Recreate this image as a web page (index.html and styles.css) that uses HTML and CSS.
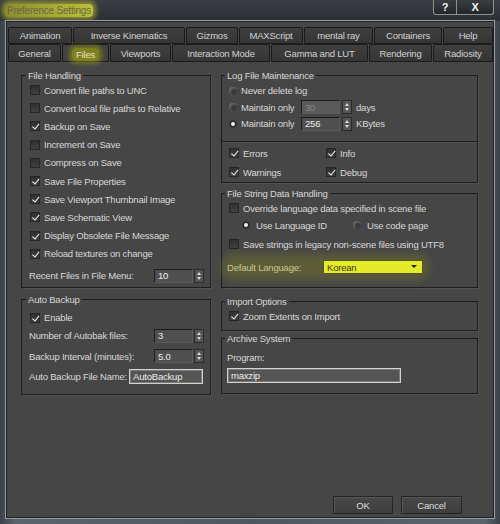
FILE: index.html
```html
<!DOCTYPE html>
<html>

<head>
  <title>Preference Settings</title>
  <link rel="stylesheet" href="styles.css">
</head>

<body>
 <div class="window">
  <div class="title-bar">
    <span class="title">Preference Settings</span>
    <div class="title-btns">
      <span class="tbtn tbtn-help">?</span>
      <span class="tbtn tbtn-close">X</span>
    </div>
  </div>

  <div class="client">
    <div class="tabs tabs-top">
      <span class="tab">Animation</span>
      <span class="tab">Inverse Kinematics</span>
      <span class="tab">Gizmos</span>
      <span class="tab">MAXScript</span>
      <span class="tab">mental ray</span>
      <span class="tab">Containers</span>
      <span class="tab">Help</span>
    </div>
    <div class="tabs tabs-bottom">
      <span class="tab">General</span>
      <span class="tab active"><span class="marker-files">Files</span></span>
      <span class="tab">Viewports</span>
      <span class="tab">Interaction Mode</span>
      <span class="tab">Gamma and LUT</span>
      <span class="tab">Rendering</span>
      <span class="tab">Radiosity</span>
    </div>

    <div class="page">
      <!-- left column -->
      <div class="col col-left">
        <fieldset class="group file-handling">
          <legend>File Handling</legend>
          <div class="row"><span class="cb"></span>Convert file paths to UNC</div>
          <div class="row"><span class="cb"></span>Convert local file paths to Relative</div>
          <div class="row"><span class="cb on"></span>Backup on Save</div>
          <div class="row"><span class="cb"></span>Increment on Save</div>
          <div class="row"><span class="cb"></span>Compress on Save</div>
          <div class="row"><span class="cb on"></span>Save File Properties</div>
          <div class="row"><span class="cb on"></span>Save Viewport Thumbnail Image</div>
          <div class="row"><span class="cb on"></span>Save Schematic View</div>
          <div class="row"><span class="cb on"></span>Display Obsolete File Message</div>
          <div class="row"><span class="cb on"></span>Reload textures on change</div>
          <div class="field-row recent-row">
            <span>Recent Files in File Menu:</span>
            <span class="num">10</span>
            <span class="spin"></span>
          </div>
        </fieldset>

        <fieldset class="group auto-backup">
          <legend>Auto Backup</legend>
          <div class="row enable-row"><span class="cb on"></span>Enable</div>
          <div class="field-row">
            <span>Number of Autobak files:</span>
            <span class="num">3</span>
            <span class="spin"></span>
          </div>
          <div class="field-row">
            <span>Backup Interval (minutes):</span>
            <span class="num">5.0</span>
            <span class="spin"></span>
          </div>
          <div class="field-row name-row">
            <span>Auto Backup File Name:</span>
            <span class="text-box">AutoBackup</span>
          </div>
        </fieldset>
      </div>

      <!-- right column -->
      <div class="col col-right">
        <fieldset class="group log-group">
          <legend>Log File Maintenance</legend>
          <div class="radio-row"><span class="opt"><span class="rb"></span>Never delete log</span></div>
          <div class="radio-row">
            <span class="opt"><span class="rb"></span>Maintain only</span>
            <span class="num disabled">30</span>
            <span class="spin"></span>
            <span class="unit">days</span>
          </div>
          <div class="radio-row">
            <span class="opt"><span class="rb on"></span>Maintain only</span>
            <span class="num">256</span>
            <span class="spin"></span>
            <span class="unit">KBytes</span>
          </div>
          <div class="divider"></div>
          <div class="check-grid">
            <div class="row"><span class="cb on"></span>Errors</div>
            <div class="row"><span class="cb on"></span>Info</div>
            <div class="row"><span class="cb on"></span>Warnings</div>
            <div class="row"><span class="cb on"></span>Debug</div>
          </div>
        </fieldset>

        <fieldset class="group string-group">
          <legend>File String Data Handling</legend>
          <div class="row override-row"><span class="cb"></span>Override language data specified in scene file</div>
          <div class="lang-radios">
            <span class="opt"><span class="rb on"></span>Use Language ID</span>
            <span class="opt"><span class="rb"></span>Use code page</span>
          </div>
          <div class="row utf-row"><span class="cb"></span>Save strings in legacy non-scene files using UTF8</div>
          <div class="lang-row">
            <span class="lang-label">Default Language:</span>
            <span class="dropdown">Korean<span class="drop-arrow"></span></span>
          </div>
        </fieldset>

        <fieldset class="group import-group">
          <legend>Import Options</legend>
          <div class="row"><span class="cb on"></span>Zoom Extents on Import</div>
        </fieldset>

        <fieldset class="group archive-group">
          <legend>Archive System</legend>
          <div class="program-label">Program:</div>
          <div class="text-box program-box">maxzip</div>
        </fieldset>
      </div>
    </div>

    <div class="footer">
      <button class="btn">OK</button>
      <button class="btn">Cancel</button>
    </div>
  </div>
 </div>
</body>

</html>
```

FILE: styles.css
```css
body {
    margin: 0;
    font-family: "Liberation Sans", Arial, sans-serif;
    font-size: 9.5px;
    letter-spacing: -0.2px;
    color: #d8d8d8;
    background: #4a5057;
}
.window {
    width: 500px;
    height: 524px;
    box-sizing: border-box;
    display: flex;
    flex-direction: column;
    padding: 0 6px 6px 6px;
    background: linear-gradient(to right, #3c4147, #5c636a 3%, #4f565d 50%, #5c636a 97%, #3c4147);
}

/* title bar */
.title-bar {
    height: 21px;
    margin: 0 -6px;
    padding: 0 6px 0 5px;
    display: flex;
    align-items: flex-start;
    justify-content: space-between;
    background: linear-gradient(#3b3e42, #2b2e32);
}
.title {
    margin-top: 4px;
    padding: 1px 2px;
    font-size: 10px;
    color: #66664a;
    border-radius: 4px;
    background: linear-gradient(to right, rgba(150,150,45,.9), rgba(195,200,55,.95));
    box-shadow: 0 0 5px 3px rgba(175,180,45,.7);
}
.title-btns {
    display: flex;
}
.tbtn {
    height: 15px;
    box-sizing: border-box;
    display: flex;
    align-items: center;
    justify-content: center;
    color: #f2f2f2;
    font-weight: bold;
    font-size: 11px;
    background: linear-gradient(#3a3d41, #24272a);
    border: 1px solid #8c9197;
    border-top: none;
}
.tbtn-help {
    width: 24px;
    border-radius: 0 0 0 3px;
}
.tbtn-close {
    width: 37px;
    border-left: none;
    border-radius: 0 0 3px 0;
}

/* client area */
.client {
    flex: 1;
    display: flex;
    flex-direction: column;
    padding: 5px 0 3px 1px;
    background: #464646;
    border: 1px solid #1f2225;
    box-shadow: 0 0 0 1px #979ea5;
}
.tabs {
    display: grid;
    column-gap: 1px;
    height: 17px;
}
.tabs-top {
    grid-template-columns: 64px 112px 52px 64px 69px 68px 50px;
}
.tabs-bottom {
    grid-template-columns: 53px 47px 61px 98px 97px 63px 60px;
}
.tab {
    display: flex;
    align-items: center;
    justify-content: center;
    box-sizing: border-box;
    color: #d2d2d2;
    background: linear-gradient(#3f3f3f, #353535);
    border: 1px solid #1b1b1b;
    border-radius: 2px 2px 0 0;
}
.tab.active {
    background: #424242;
}
.marker-files {
    padding: 1px 4px;
    margin-top: 3px;
    color: #e6e6b8;
    border-radius: 4px;
    background: rgba(150,150,25,.75);
    box-shadow: 0 0 4px 3px rgba(150,150,25,.55);
}

/* page with group boxes */
.page {
    flex: 1;
    display: grid;
    grid-template-columns: 190px 257px;
    column-gap: 10px;
    align-items: start;
    padding: 8.5px 0 0 13px;
}
.col {
    display: flex;
    flex-direction: column;
}
.group {
    box-sizing: border-box;
    margin: 0;
    min-width: 0;
    border: 1px solid #1e1e1e;
    box-shadow: 1px 1px 0 #525252;
}
.group legend {
    padding: 0 2px;
    margin-left: -4px;
    line-height: 11px;
    color: #d6d6d6;
}
.col-left .group {
    padding: 0 8px;
}
.col-right .group {
    padding: 0 7px;
}
.file-handling {
    height: 218.5px;
    padding-top: 0.5px !important;
}
.auto-backup {
    height: 101px;
    margin-top: 5.5px !important;
}
.log-group {
    height: 113.5px;
}
.string-group {
    height: 100.5px;
    margin-top: 4.5px !important;
}
.import-group {
    height: 35.5px;
    margin-top: 7.5px !important;
}
.archive-group {
    height: 61.5px;
    margin-top: 1.5px !important;
}

/* rows */
.row {
    display: flex;
    align-items: center;
    height: 18.2px;
    white-space: nowrap;
}
.cb {
    position: relative;
    flex: none;
    width: 10px;
    height: 10px;
    box-sizing: border-box;
    margin-right: 4px;
    border: 1px solid #262626;
    background: linear-gradient(#303030, #404040);
}
.cb.on::after {
    content: "";
    position: absolute;
    left: 2.5px;
    top: 0;
    width: 2.5px;
    height: 5.5px;
    border: solid #f2f2f2;
    border-width: 0 1.6px 1.6px 0;
    transform: rotate(40deg);
}
.rb {
    position: relative;
    flex: none;
    width: 8px;
    height: 8px;
    margin-right: 4px;
    border-radius: 50%;
    background: radial-gradient(circle at 65% 65%, #3a3a3a 30%, #6e6e6e 75%, #8a8a8a);
}
.rb.on {
    background: radial-gradient(circle, #2a2a2a 55%, #5a5a5a);
}
.rb.on::after {
    content: "";
    position: absolute;
    left: 2px;
    top: 2px;
    width: 4px;
    height: 4px;
    border-radius: 50%;
    background: #f2f2f2;
}
.opt {
    display: flex;
    align-items: center;
    white-space: nowrap;
}

/* numeric spinners and text boxes */
.num {
    height: 14px;
    box-sizing: border-box;
    display: flex;
    align-items: center;
    padding-left: 3px;
    color: #ececec;
    background: #4f4f4f;
    border: 1px solid #1c1c1c;
    border-right-color: #5a5a5a;
    border-bottom-color: #5a5a5a;
}
.num.disabled {
    color: #8a8a8a;
    background: #5a5a5a;
}
.spin {
    position: relative;
    width: 10px;
    height: 14px;
    box-sizing: border-box;
    margin-left: 1px;
    background: #555;
    border: 1px solid #2a2a2a;
}
.spin::before,
.spin::after {
    content: "";
    position: absolute;
    left: 1.5px;
    border-left: 2.5px solid transparent;
    border-right: 2.5px solid transparent;
}
.spin::before {
    top: 2px;
    border-bottom: 3px solid #dcdcdc;
}
.spin::after {
    bottom: 2px;
    border-top: 3px solid #dcdcdc;
}
.text-box {
    height: 15px;
    box-sizing: border-box;
    display: flex;
    align-items: center;
    padding-left: 3px;
    color: #ececec;
    background: #545454;
    border: 1px solid #d2d2d2;
    box-shadow: inset 0 0 0 1px #7a7a7a;
}

/* left column field rows */
.field-row {
    display: grid;
    grid-template-columns: 125px 39px 10px;
    align-items: center;
    height: 20.5px;
    margin-left: -1px;
    white-space: nowrap;
}
.recent-row {
    height: 18px;
    margin-top: 4px;
}
.enable-row {
    height: 16px;
    margin-top: 5px;
}
.name-row {
    grid-template-columns: 100px 74px;
}

/* log group */
.log-group .radio-row:first-of-type {
    margin-top: 2px;
}
.radio-row {
    display: grid;
    grid-template-columns: 72px 39px auto auto;
    justify-content: start;
    align-items: center;
    height: 16.5px;
}
.radio-row .spin {
    margin-left: 2px;
}
.unit {
    margin-left: 4px;
}
.divider {
    margin: 9px -7px 0 -7px;
    border-top: 1px solid #1e1e1e;
    box-shadow: 0 1px 0 #525252;
}
.check-grid {
    display: grid;
    grid-template-columns: 97px auto;
    margin-top: 1.5px;
}
.check-grid .row {
    height: 19px;
}

/* file string group */
.override-row {
    height: 17px;
    margin-top: 1px;
}
.lang-radios {
    display: grid;
    grid-template-columns: 111px auto;
    align-items: center;
    height: 17px;
    padding-left: 13px;
}
.lang-radios .rb {
    margin-right: 6px;
}
.utf-row {
    height: 17px;
    margin-top: 2px;
}
.lang-row {
    display: grid;
    grid-template-columns: 96px 100px;
    align-items: center;
    height: 14px;
    margin: 7.5px 0 0 -2px;
    width: 196px;
    border-radius: 8px;
    background: rgba(135,135,35,.35);
    box-shadow: 0 0 7px 7px rgba(135,135,35,.3);
}
.lang-label {
    color: #c9c98a;
}
.dropdown {
    position: relative;
    height: 14px;
    box-sizing: border-box;
    display: flex;
    align-items: center;
    padding-left: 3px;
    color: #3a3a1e;
    background: #e6ea2c;
    border: 1px solid #55561a;
}
.drop-arrow {
    position: absolute;
    right: 5px;
    top: 4px;
    border-left: 3px solid transparent;
    border-right: 3px solid transparent;
    border-top: 3.5px solid #222;
}

/* import + archive */
.import-group .row {
    height: 17px;
    margin-top: 1px;
}
.program-label {
    height: 14px;
    line-height: 14px;
    margin: 7.5px 0 0 -2px;
}
.program-box {
    width: 174px;
    margin: 3px 0 0 -2px;
}

/* buttons */
.footer {
    display: flex;
    justify-content: flex-end;
    gap: 8px;
    padding-right: 31px;
}
.btn {
    width: 60px;
    height: 18px;
    padding: 0;
    font-family: inherit;
    font-size: 9.5px;
    letter-spacing: -0.2px;
    color: #dedede;
    background: linear-gradient(#484848, #3e3e3e);
    border: 1px solid #242424;
    box-shadow: inset 1px 1px 0 #585858;
    border-radius: 1px;
}
.btn + .btn {
    width: 61px;
}
```
